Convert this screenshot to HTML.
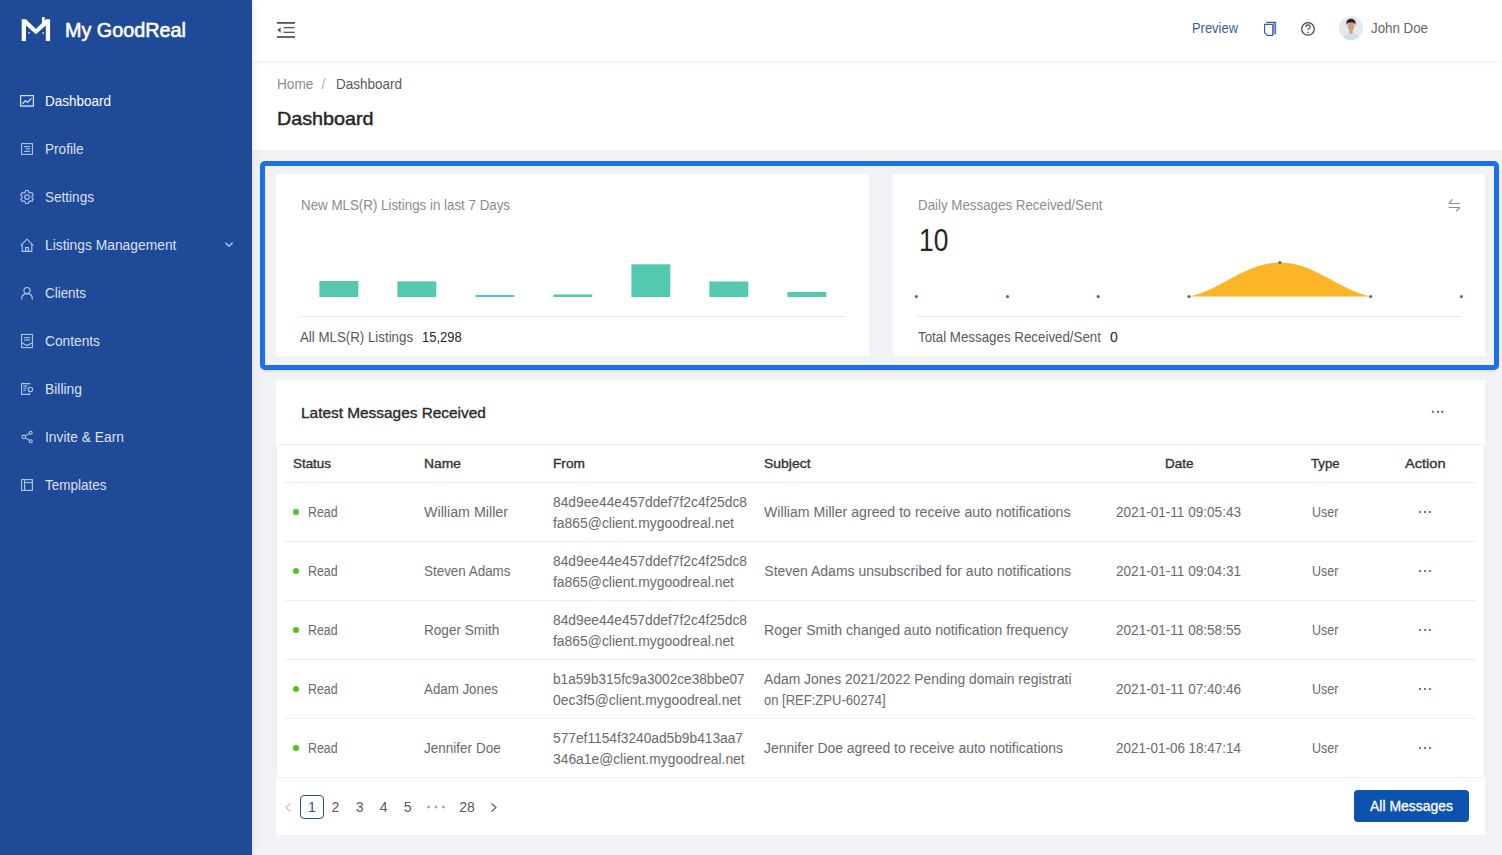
<!DOCTYPE html>
<html><head><meta charset="utf-8"><title>Dashboard</title>
<style>
html,body{margin:0;padding:0;}
body{width:1502px;height:855px;overflow:hidden;position:relative;background:#f0f2f5;font-family:"Liberation Sans",sans-serif;}
.t{position:absolute;white-space:nowrap;line-height:1;z-index:5;transform-origin:0 0}
.b{position:absolute;box-sizing:content-box;}
</style></head><body>
<div class="b" style="left:0;top:0;width:252px;height:855px;background:#1e4a98;box-shadow:2px 0 6px rgba(0,21,41,.08);z-index:3"></div>
<div class="b" style="left:252px;top:0;width:1250px;height:61px;background:#fff;box-shadow:0 1px 4px rgba(0,21,41,.08);z-index:2"></div>
<div class="b" style="left:252px;top:61px;width:1250px;height:89px;background:#fff;"></div>
<div class="b" style="left:260px;top:161px;width:1229px;height:199px;border:5px solid #1c6fe8;border-radius:5px;box-shadow:0 1px 3px rgba(0,0,0,.10);"></div>
<div class="b" style="left:276px;top:174px;width:593px;height:182px;background:#fff;"></div>
<div class="b" style="left:893px;top:174px;width:592px;height:182px;background:#fff;"></div>
<div class="b" style="left:276px;top:380px;width:1209px;height:455px;background:#fff;"></div>
<div class="b" style="left:276px;top:444px;width:1207px;height:332px;border:1px solid #eceef1;border-radius:3px;"></div>
<div class="b" style="left:285px;top:482px;width:1191px;height:1px;background:#ebedf0;"></div>
<div class="b" style="left:285px;top:541px;width:1191px;height:1px;background:#ebedf0;"></div>
<div class="b" style="left:285px;top:600px;width:1191px;height:1px;background:#ebedf0;"></div>
<div class="b" style="left:285px;top:659px;width:1191px;height:1px;background:#ebedf0;"></div>
<div class="b" style="left:285px;top:718px;width:1191px;height:1px;background:#ebedf0;"></div>
<div class="b" style="left:300px;top:316px;width:545px;height:1px;background:#e8e8e8;"></div>
<div class="b" style="left:917px;top:316px;width:544px;height:1px;background:#e8e8e8;"></div>
<div class="t" style="left:65.00px;top:21px;font-size:19.90px;color:#fff;transform:scaleX(0.9943);-webkit-text-stroke:0.6px #fff;">My GoodReal</div>
<div class="t" style="left:44.50px;top:94px;font-size:14.00px;color:#ffffff;transform:scaleX(0.9641);">Dashboard</div>
<div class="t" style="left:44.50px;top:142px;font-size:14.00px;color:rgba(255,255,255,0.86);transform:scaleX(0.9725);">Profile</div>
<div class="t" style="left:44.50px;top:190px;font-size:14.00px;color:rgba(255,255,255,0.86);transform:scaleX(0.9682);">Settings</div>
<div class="t" style="left:44.50px;top:238px;font-size:14.00px;color:rgba(255,255,255,0.86);transform:scaleX(0.9875);">Listings Management</div>
<div class="t" style="left:44.50px;top:286px;font-size:14.00px;color:rgba(255,255,255,0.86);transform:scaleX(0.9586);">Clients</div>
<div class="t" style="left:44.50px;top:334px;font-size:14.00px;color:rgba(255,255,255,0.86);transform:scaleX(0.9809);">Contents</div>
<div class="t" style="left:44.50px;top:382px;font-size:14.00px;color:rgba(255,255,255,0.86);transform:scaleX(0.9898);">Billing</div>
<div class="t" style="left:44.50px;top:430px;font-size:14.00px;color:rgba(255,255,255,0.86);transform:scaleX(0.9857);">Invite &amp; Earn</div>
<div class="t" style="left:44.50px;top:478px;font-size:14.00px;color:rgba(255,255,255,0.86);transform:scaleX(0.9633);">Templates</div>
<div class="t" style="left:1191.80px;top:21px;font-size:14.00px;color:#3b5ba5;transform:scaleX(0.9230);">Preview</div>
<div class="t" style="left:1370.70px;top:21px;font-size:14.00px;color:#666;transform:scaleX(0.9513);">John Doe</div>
<div class="t" style="left:276.80px;top:77px;font-size:14.00px;color:#8c8c8c;transform:scaleX(0.9738);">Home</div>
<div class="t" style="left:321.50px;top:77px;font-size:14.00px;color:#b0b0b0;">/</div>
<div class="t" style="left:336.00px;top:77px;font-size:14.00px;color:#595959;transform:scaleX(0.9641);">Dashboard</div>
<div class="t" style="left:277.00px;top:109px;font-size:19.00px;color:#262626;transform:scaleX(1.0386);-webkit-text-stroke:0.45px #262626;">Dashboard</div>
<div class="t" style="left:300.90px;top:198px;font-size:14.00px;color:#8c8c8c;transform:scaleX(0.9527);">New MLS(R) Listings in last 7 Days</div>
<div class="t" style="left:300.00px;top:330px;font-size:14.00px;color:#595959;transform:scaleX(0.9496);">All MLS(R) Listings</div>
<div class="t" style="left:422.00px;top:330px;font-size:14.00px;color:#262626;transform:scaleX(0.9244);">15,298</div>
<div class="t" style="left:917.50px;top:198px;font-size:14.00px;color:#8c8c8c;transform:scaleX(0.9522);">Daily Messages Received/Sent</div>
<div class="t" style="left:918.90px;top:225px;font-size:30.60px;color:#262626;transform:scaleX(0.8626);">10</div>
<div class="t" style="left:917.90px;top:330px;font-size:14.00px;color:#595959;transform:scaleX(0.9520);">Total Messages Received/Sent</div>
<div class="t" style="left:1110.00px;top:330px;font-size:14.00px;color:#262626;">0</div>
<div class="t" style="left:300.90px;top:406px;font-size:14.70px;color:#2b2b2b;transform:scaleX(1.0483);-webkit-text-stroke:0.35px #2b2b2b;">Latest Messages Received</div>
<div class="t" style="left:293.00px;top:457px;font-size:13.30px;color:#333;transform:scaleX(1.0078);-webkit-text-stroke:0.35px #333;">Status</div>
<div class="t" style="left:423.50px;top:457px;font-size:13.30px;color:#333;transform:scaleX(1.0419);-webkit-text-stroke:0.35px #333;">Name</div>
<div class="t" style="left:553.30px;top:457px;font-size:13.30px;color:#333;transform:scaleX(1.0304);-webkit-text-stroke:0.35px #333;">From</div>
<div class="t" style="left:764.30px;top:457px;font-size:13.30px;color:#333;transform:scaleX(1.0506);-webkit-text-stroke:0.35px #333;">Subject</div>
<div class="t" style="left:1164.50px;top:457px;font-size:13.30px;color:#333;transform:scaleX(1.0191);-webkit-text-stroke:0.35px #333;">Date</div>
<div class="t" style="left:1311.20px;top:457px;font-size:13.30px;color:#333;transform:scaleX(0.9910);-webkit-text-stroke:0.35px #333;">Type</div>
<div class="t" style="left:1404.75px;top:457px;font-size:13.30px;color:#333;transform:scaleX(1.0954);-webkit-text-stroke:0.35px #333;">Action</div>
<div class="b" style="left:293px;top:509px;width:6px;height:6px;border-radius:50%;background:#52c41a;"></div>
<div class="t" style="left:307.50px;top:505px;font-size:14.00px;color:#6a6a6a;transform:scaleX(0.8846);">Read</div>
<div class="t" style="left:423.50px;top:505px;font-size:14.00px;color:#6a6a6a;transform:scaleX(1.0187);">William Miller</div>
<div class="t" style="left:553.00px;top:495px;font-size:14.00px;color:#6a6a6a;transform:scaleX(0.9849);">84d9ee44e457ddef7f2c4f25dc8</div>
<div class="t" style="left:553.00px;top:516px;font-size:14.00px;color:#6a6a6a;transform:scaleX(0.9926);">fa865@client.mygoodreal.net</div>
<div class="t" style="left:764.30px;top:505px;font-size:14.00px;color:#6a6a6a;transform:scaleX(1.0101);">William Miller agreed to receive auto notifications</div>
<div class="t" style="left:1116.00px;top:505px;font-size:14.00px;color:#6a6a6a;transform:scaleX(0.9694);">2021-01-11 09:05:43</div>
<div class="t" style="left:1312.05px;top:505px;font-size:14.00px;color:#6a6a6a;transform:scaleX(0.8903);">User</div>
<svg class="b" style="left:1417px;top:508px" width="16" height="8"><circle cx="3" cy="4" r="1.1" fill="#3a5a9a"/><circle cx="8" cy="4" r="1.1" fill="#3a5a9a"/><circle cx="13" cy="4" r="1.1" fill="#3a5a9a"/></svg>
<div class="b" style="left:293px;top:568px;width:6px;height:6px;border-radius:50%;background:#52c41a;"></div>
<div class="t" style="left:307.50px;top:564px;font-size:14.00px;color:#6a6a6a;transform:scaleX(0.8846);">Read</div>
<div class="t" style="left:423.50px;top:564px;font-size:14.00px;color:#6a6a6a;transform:scaleX(0.9579);">Steven Adams</div>
<div class="t" style="left:553.00px;top:554px;font-size:14.00px;color:#6a6a6a;transform:scaleX(0.9849);">84d9ee44e457ddef7f2c4f25dc8</div>
<div class="t" style="left:553.00px;top:575px;font-size:14.00px;color:#6a6a6a;transform:scaleX(0.9926);">fa865@client.mygoodreal.net</div>
<div class="t" style="left:764.30px;top:564px;font-size:14.00px;color:#6a6a6a;">Steven Adams unsubscribed for auto notifications</div>
<div class="t" style="left:1116.00px;top:564px;font-size:14.00px;color:#6a6a6a;transform:scaleX(0.9694);">2021-01-11 09:04:31</div>
<div class="t" style="left:1312.05px;top:564px;font-size:14.00px;color:#6a6a6a;transform:scaleX(0.8903);">User</div>
<svg class="b" style="left:1417px;top:567px" width="16" height="8"><circle cx="3" cy="4" r="1.1" fill="#3a5a9a"/><circle cx="8" cy="4" r="1.1" fill="#3a5a9a"/><circle cx="13" cy="4" r="1.1" fill="#3a5a9a"/></svg>
<div class="b" style="left:293px;top:627px;width:6px;height:6px;border-radius:50%;background:#52c41a;"></div>
<div class="t" style="left:307.50px;top:623px;font-size:14.00px;color:#6a6a6a;transform:scaleX(0.8846);">Read</div>
<div class="t" style="left:423.50px;top:623px;font-size:14.00px;color:#6a6a6a;transform:scaleX(0.9687);">Roger Smith</div>
<div class="t" style="left:553.00px;top:613px;font-size:14.00px;color:#6a6a6a;transform:scaleX(0.9849);">84d9ee44e457ddef7f2c4f25dc8</div>
<div class="t" style="left:553.00px;top:634px;font-size:14.00px;color:#6a6a6a;transform:scaleX(0.9926);">fa865@client.mygoodreal.net</div>
<div class="t" style="left:764.30px;top:623px;font-size:14.00px;color:#6a6a6a;transform:scaleX(1.0041);">Roger Smith changed auto notification frequency</div>
<div class="t" style="left:1116.00px;top:623px;font-size:14.00px;color:#6a6a6a;transform:scaleX(0.9694);">2021-01-11 08:58:55</div>
<div class="t" style="left:1312.05px;top:623px;font-size:14.00px;color:#6a6a6a;transform:scaleX(0.8903);">User</div>
<svg class="b" style="left:1417px;top:626px" width="16" height="8"><circle cx="3" cy="4" r="1.1" fill="#3a5a9a"/><circle cx="8" cy="4" r="1.1" fill="#3a5a9a"/><circle cx="13" cy="4" r="1.1" fill="#3a5a9a"/></svg>
<div class="b" style="left:293px;top:686px;width:6px;height:6px;border-radius:50%;background:#52c41a;"></div>
<div class="t" style="left:307.50px;top:682px;font-size:14.00px;color:#6a6a6a;transform:scaleX(0.8846);">Read</div>
<div class="t" style="left:423.50px;top:682px;font-size:14.00px;color:#6a6a6a;transform:scaleX(0.9507);">Adam Jones</div>
<div class="t" style="left:553.00px;top:672px;font-size:14.00px;color:#6a6a6a;transform:scaleX(0.9732);">b1a59b315fc9a3002ce38bbe07</div>
<div class="t" style="left:553.00px;top:693px;font-size:14.00px;color:#6a6a6a;transform:scaleX(0.9929);">0ec3f5@client.mygoodreal.net</div>
<div class="t" style="left:764.30px;top:672px;font-size:14.00px;color:#6a6a6a;transform:scaleX(0.9903);">Adam Jones 2021/2022 Pending domain registrati</div>
<div class="t" style="left:764.30px;top:693px;font-size:14.00px;color:#6a6a6a;transform:scaleX(0.9299);">on [REF:ZPU-60274]</div>
<div class="t" style="left:1116.00px;top:682px;font-size:14.00px;color:#6a6a6a;transform:scaleX(0.9694);">2021-01-11 07:40:46</div>
<div class="t" style="left:1312.05px;top:682px;font-size:14.00px;color:#6a6a6a;transform:scaleX(0.8903);">User</div>
<svg class="b" style="left:1417px;top:685px" width="16" height="8"><circle cx="3" cy="4" r="1.1" fill="#3a5a9a"/><circle cx="8" cy="4" r="1.1" fill="#3a5a9a"/><circle cx="13" cy="4" r="1.1" fill="#3a5a9a"/></svg>
<div class="b" style="left:293px;top:745px;width:6px;height:6px;border-radius:50%;background:#52c41a;"></div>
<div class="t" style="left:307.50px;top:741px;font-size:14.00px;color:#6a6a6a;transform:scaleX(0.8846);">Read</div>
<div class="t" style="left:423.50px;top:741px;font-size:14.00px;color:#6a6a6a;transform:scaleX(0.9662);">Jennifer Doe</div>
<div class="t" style="left:553.00px;top:731px;font-size:14.00px;color:#6a6a6a;transform:scaleX(0.9813);">577ef1154f3240ad5b9b413aa7</div>
<div class="t" style="left:553.00px;top:752px;font-size:14.00px;color:#6a6a6a;transform:scaleX(0.9879);">346a1e@client.mygoodreal.net</div>
<div class="t" style="left:764.30px;top:741px;font-size:14.00px;color:#6a6a6a;transform:scaleX(0.9952);">Jennifer Doe agreed to receive auto notifications</div>
<div class="t" style="left:1116.00px;top:741px;font-size:14.00px;color:#6a6a6a;transform:scaleX(0.9616);">2021-01-06 18:47:14</div>
<div class="t" style="left:1312.05px;top:741px;font-size:14.00px;color:#6a6a6a;transform:scaleX(0.8903);">User</div>
<svg class="b" style="left:1417px;top:744px" width="16" height="8"><circle cx="3" cy="4" r="1.1" fill="#3a5a9a"/><circle cx="8" cy="4" r="1.1" fill="#3a5a9a"/><circle cx="13" cy="4" r="1.1" fill="#3a5a9a"/></svg>
<svg class="b" style="left:282px;top:801px" width="12" height="12"><path d="M8.5 2.5 L4 6.5 L8.5 10.5" fill="none" stroke="#bfbfbf" stroke-width="1.1"/></svg>
<div class="b" style="left:300px;top:795px;width:22px;height:22px;border:1px solid #2f4f8f;border-radius:4px;"></div>
<div class="t" style="left:308.01px;top:800px;font-size:14.00px;color:#2f4f8f;">1</div>
<div class="t" style="left:331.51px;top:800px;font-size:14.00px;color:#595959;">2</div>
<div class="t" style="left:355.72px;top:800px;font-size:14.00px;color:#595959;">3</div>
<div class="t" style="left:379.81px;top:800px;font-size:14.00px;color:#595959;">4</div>
<div class="t" style="left:403.72px;top:800px;font-size:14.00px;color:#595959;">5</div>
<svg class="b" style="left:426px;top:804px" width="20" height="6"><circle cx="2.5" cy="3" r="1.45" fill="#a8a8a8"/><circle cx="10" cy="3" r="1.45" fill="#a8a8a8"/><circle cx="17.5" cy="3" r="1.45" fill="#a8a8a8"/></svg>
<div class="t" style="left:459.13px;top:800px;font-size:14.00px;color:#595959;">28</div>
<svg class="b" style="left:488px;top:801px" width="12" height="12"><path d="M3.5 2.5 L8 6.5 L3.5 10.5" fill="none" stroke="#595959" stroke-width="1.1"/></svg>
<div class="b" style="left:1354px;top:790px;width:115px;height:32px;background:#0e52b0;border-radius:4px;"></div>
<div class="t" style="left:1369.50px;top:799px;font-size:14.00px;color:#fff;transform:scaleX(0.9972);-webkit-text-stroke:0.3px #fff;">All Messages</div>
<svg class="b" style="left:0;top:0;z-index:3" width="252" height="520" viewBox="0 0 252 520">
<path d="M21.7 19.2 L26 19.2 L35.9 29.1 L45.8 19.2 L50.1 19.2 L50.1 40.9 L45.8 40.9 L45.8 25.4 L35.9 34.3 L26 25.4 L26 40.9 L21.7 40.9 Z" fill="#fff"/>
<rect x="41.9" y="17.1" width="2.8" height="6.5" fill="#fff"/>
<rect x="28.3" y="32.2" width="1.5" height="1.5" fill="#dbe6ff"/>
<rect x="42.5" y="32.2" width="1.5" height="1.5" fill="#dbe6ff"/>
<g fill="none" stroke="#d5e2fa" stroke-width="1.25">
<rect x="20.6" y="95.6" width="12.8" height="10.4"/>
<line x1="20.6" y1="106.6" x2="33.4" y2="106.6" stroke="#9fb6e6" stroke-width="1"/>
<polyline points="22.6,103.8 25.6,100.6 27.6,102.4 31.4,98.4" stroke-width="1.3"/>
</g>
<g fill="none" stroke="#b3c7ee" stroke-width="1.1">
<rect x="21.6" y="143.6" width="10.8" height="10.8"/>
<line x1="24" y1="146.6" x2="30" y2="146.6"/><line x1="25.5" y1="148.8" x2="30" y2="148.8"/><line x1="24" y1="151.4" x2="30" y2="151.4"/>
<path d="M28.87 192.36 L28.37 190.54 L25.63 190.54 L25.13 192.36 L23.92 193.06 L22.10 192.58 L20.72 194.96 L22.05 196.30 L22.05 197.70 L20.72 199.04 L22.10 201.42 L23.92 200.94 L25.13 201.64 L25.63 203.46 L28.37 203.46 L28.87 201.64 L30.08 200.94 L31.90 201.42 L33.28 199.04 L31.95 197.70 L31.95 196.30 L33.28 194.96 L31.90 192.58 L30.08 193.06 Z"/>
<circle cx="27" cy="197" r="2.3"/>
<polyline points="20.6,245.6 27,239.2 33.4,245.6"/>
<polyline points="22.2,244.2 22.2,251.4 31.8,251.4 31.8,244.2"/>
<polyline points="25.6,251.4 25.6,247.6 28.4,247.6 28.4,251.4"/>
<circle cx="27" cy="290.6" r="3.1"/>
<path d="M21.6 299.4 C21.6 295.6 24 293.6 27 293.6 C30 293.6 32.4 295.6 32.4 299.4"/>
<rect x="21.6" y="334.4" width="10.8" height="13.2"/>
<line x1="24" y1="337.6" x2="30" y2="337.6"/><line x1="24" y1="340" x2="30" y2="340"/>
<polyline points="22.2,343 27,345.6 31.8,343"/>
<path d="M29.6 384.6 L29.6 383.6 L21.6 383.6 L21.6 394.4 L29.6 394.4 L29.6 393"/>
<line x1="23.4" y1="386" x2="27.6" y2="386"/><line x1="23.4" y1="388.2" x2="26.6" y2="388.2"/><line x1="23.4" y1="390.4" x2="25.8" y2="390.4"/>
<circle cx="30.4" cy="389.4" r="2.2"/>
<circle cx="23.8" cy="436.9" r="1.8"/><circle cx="30.7" cy="432.7" r="1.5"/><circle cx="30.7" cy="441.2" r="1.5"/>
<line x1="25.4" y1="435.9" x2="29.4" y2="433.5"/><line x1="25.4" y1="437.9" x2="29.4" y2="440.4"/>
<rect x="21.6" y="479.6" width="10.8" height="10.8"/>
<line x1="24.6" y1="479.6" x2="24.6" y2="490.4"/><line x1="24.6" y1="482.6" x2="32.4" y2="482.6"/>
</g>
<polyline points="225.4,242.6 229,246.2 232.6,242.6" fill="none" stroke="#a9c0ea" stroke-width="1.5"/>
</svg>
<svg class="b" style="left:252px;top:0;z-index:3" width="1250" height="61" viewBox="252 0 1250 61">
<rect x="277" y="22" width="18" height="1.8" fill="#555"/>
<rect x="277" y="36.1" width="18" height="1.8" fill="#555"/>
<rect x="283.6" y="27" width="11" height="1.3" fill="#555"/>
<rect x="283.6" y="31.7" width="11" height="1.3" fill="#555"/>
<path d="M277.3 30 L280.6 27.2 L280.6 32.8 Z" fill="#555"/>
<path d="M1266.2 22.4 L1275.6 22.4 L1275.6 33.8 L1273.2 33.8" fill="none" stroke="#3b5ba5" stroke-width="1.1"/>
<rect x="1273" y="23" width="2.3" height="10.6" fill="#8fa3d9"/>
<path d="M1264.6 24.4 L1272.8 24.4 L1272.8 35.4 L1267.2 35.4 L1264.6 32.8 Z" fill="#fff" stroke="#3b5ba5" stroke-width="1.2"/>
<path d="M1264.6 32.8 L1267.2 32.8 L1267.2 35.4 Z" fill="#8fa3d9"/>
<circle cx="1308" cy="28.9" r="6.3" fill="none" stroke="#444" stroke-width="1.25"/>
<path d="M1305.8 27.1 C1305.8 25.6 1306.8 24.9 1308 24.9 C1309.3 24.9 1310.2 25.7 1310.2 26.9 C1310.2 28.3 1308.1 28.6 1308.1 30.4" fill="none" stroke="#444" stroke-width="1.1"/>
<rect x="1307.4" y="31.9" width="1.3" height="1.3" fill="#444"/>
<defs><clipPath id="av"><circle cx="1351" cy="28" r="12"/></clipPath></defs>
<g clip-path="url(#av)">
<rect x="1339" y="16" width="24" height="24" fill="#e6e9ec"/>
<ellipse cx="1351" cy="39.8" rx="8.8" ry="6.8" fill="#d3dfe8"/>
<rect x="1349.4" y="29" width="3.2" height="4.5" fill="#c49a7e"/>
<ellipse cx="1351" cy="26.2" rx="3.3" ry="4.1" fill="#c9a185"/>
<path d="M1346.6 25.6 C1345.6 20.8 1348 18.8 1351 18.8 C1354 18.8 1356.4 20.8 1355.4 25.6 C1355 23.4 1354.2 22.6 1351 22.6 C1347.8 22.6 1347 23.4 1346.6 25.6 Z" fill="#2e211b"/>
</g>
</svg>
<svg class="b" style="left:276px;top:174px;z-index:3" width="593" height="182" viewBox="276 174 593 182"><rect x="319.4" y="281" width="38.9" height="16.0" fill="#54c8b0"/><rect x="397.4" y="281.4" width="38.9" height="15.6" fill="#54c8b0"/><rect x="475.4" y="295" width="38.9" height="2.0" fill="#54c8b0"/><rect x="553.4" y="294.4" width="38.9" height="2.6" fill="#54c8b0"/><rect x="631.4" y="264.3" width="38.9" height="32.7" fill="#54c8b0"/><rect x="709.4" y="281.5" width="38.9" height="15.5" fill="#54c8b0"/><rect x="787.4" y="292" width="38.9" height="5.0" fill="#54c8b0"/></svg>
<svg class="b" style="left:893px;top:174px;z-index:3" width="592" height="182" viewBox="893 174 592 182"><path d="M1189 296.6 C1221.7 289.8 1245.4 262.6 1279.9 262.6 C1314.4 262.6 1338.0 289.8 1370.7 296.6 Z" fill="#fdb426"/><circle cx="916.4" cy="296.6" r="1.6" fill="#4b7480"/><circle cx="1007.5" cy="296.6" r="1.6" fill="#4b7480"/><circle cx="1098.2" cy="296.6" r="1.6" fill="#4b7480"/><circle cx="1189" cy="296.6" r="1.6" fill="#4b7480"/><circle cx="1279.9" cy="262.6" r="1.6" fill="#4b7480"/><circle cx="1370.7" cy="296.6" r="1.6" fill="#4b7480"/><circle cx="1461.4" cy="296.6" r="1.6" fill="#4b7480"/><path d="M1448.6 203.5 L1460 203.5 M1448.8 203.4 L1452.5 199.4 M1448.6 207.5 L1460 207.5 M1459.8 207.6 L1456.1 211.4" fill="none" stroke="#8c8c8c" stroke-width="1.2"/></svg>
<svg class="b" style="left:1428px;top:408px" width="20" height="8"><circle cx="4.8" cy="3.8" r="1.05" fill="#3a4a80"/><circle cx="10" cy="3.8" r="1.05" fill="#3a4a80"/><circle cx="14.3" cy="3.8" r="1.05" fill="#3a4a80"/></svg>
</body></html>
